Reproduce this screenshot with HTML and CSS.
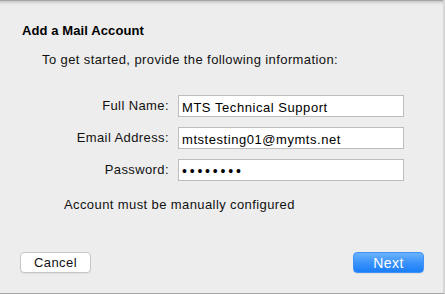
FILE: index.html
```html
<!DOCTYPE html>
<html lang="en">
<head>
    <meta charset="UTF-8">
    <title>Add a Mail Account</title>
    <link rel="stylesheet" href="styles.css">
</head>
<body>
    <div class="sheet">
        <h1 class="title">Add a Mail Account</h1>
        <p class="intro">To get started, provide the following information:</p>

        <form class="fields">
            <label for="full-name">Full Name:</label>
            <input type="text" id="full-name" value="MTS Technical Support">

            <label for="email">Email Address:</label>
            <input type="email" id="email" value="mtstesting01@mymts.net">

            <label for="password">Password:</label>
            <input type="password" id="password" value="12345678">
        </form>

        <p class="note">Account must be manually configured</p>

        <div class="actions">
            <button type="button" class="btn">Cancel</button>
            <button type="button" class="btn btn-primary">Next</button>
        </div>
    </div>
</body>
</html>
```

FILE: styles.css
```css
* {
    margin: 0;
    padding: 0;
    box-sizing: border-box;
}

body {
    font-family: 'Liberation Sans', Arial, sans-serif;
    font-size: 13px;
    line-height: 16px;
    letter-spacing: 0.4px;
    color: #111;
    background: #ededed;
}

.sheet {
    width: 445px;
    height: 294px;
    display: flex;
    flex-direction: column;
    padding: 23px 19px 0 22px;
    background: linear-gradient(to bottom, #8a8a8a 0, #c4c4c4 1px, #dedede 3px, #ededed 5px);
    border-bottom: 1px solid #a4a4a4;
    border-right: 2px solid #d6d6d6;
}

.title {
    font-size: 13px;
    font-weight: bold;
    line-height: 16px;
    letter-spacing: 0.1px;
    color: #000;
}

.intro {
    margin-top: 13px;
    padding-left: 20px;
}

.fields {
    margin-top: 27px;
    display: grid;
    grid-template-columns: 147px 226px;
    column-gap: 9px;
    row-gap: 10px;
    align-items: center;
}

.fields label {
    text-align: right;
}

.fields input {
    height: 22px;
    padding: 2px 3px 0;
    border: 1px solid #bdbdbd;
    background: #fff;
    font-family: inherit;
    font-size: 13px;
    letter-spacing: 0.55px;
    color: #000;
    outline: none;
}

.fields input[type="password"] {
    font-size: 14px;
    letter-spacing: 2.8px;
}

.note {
    margin-top: 16px;
    padding-left: 42px;
}

.actions {
    margin-top: 39px;
    display: flex;
    justify-content: space-between;
    margin-left: -2px;
}

.btn {
    width: 71px;
    height: 21px;
    border: 1px solid #c6c6c6;
    border-radius: 4px;
    background: #fff;
    font-family: inherit;
    font-size: 13px;
    letter-spacing: 0.4px;
    color: #111;
    box-shadow: 0 1px 0 rgba(0, 0, 0, 0.05);
}

.btn-primary {
    border-color: #3f92f8;
    background: linear-gradient(to bottom, #6ab3fb 0%, #3c93fa 50%, #1a7ffa 100%);
    font-size: 14px;
    color: #fff;
}
```
